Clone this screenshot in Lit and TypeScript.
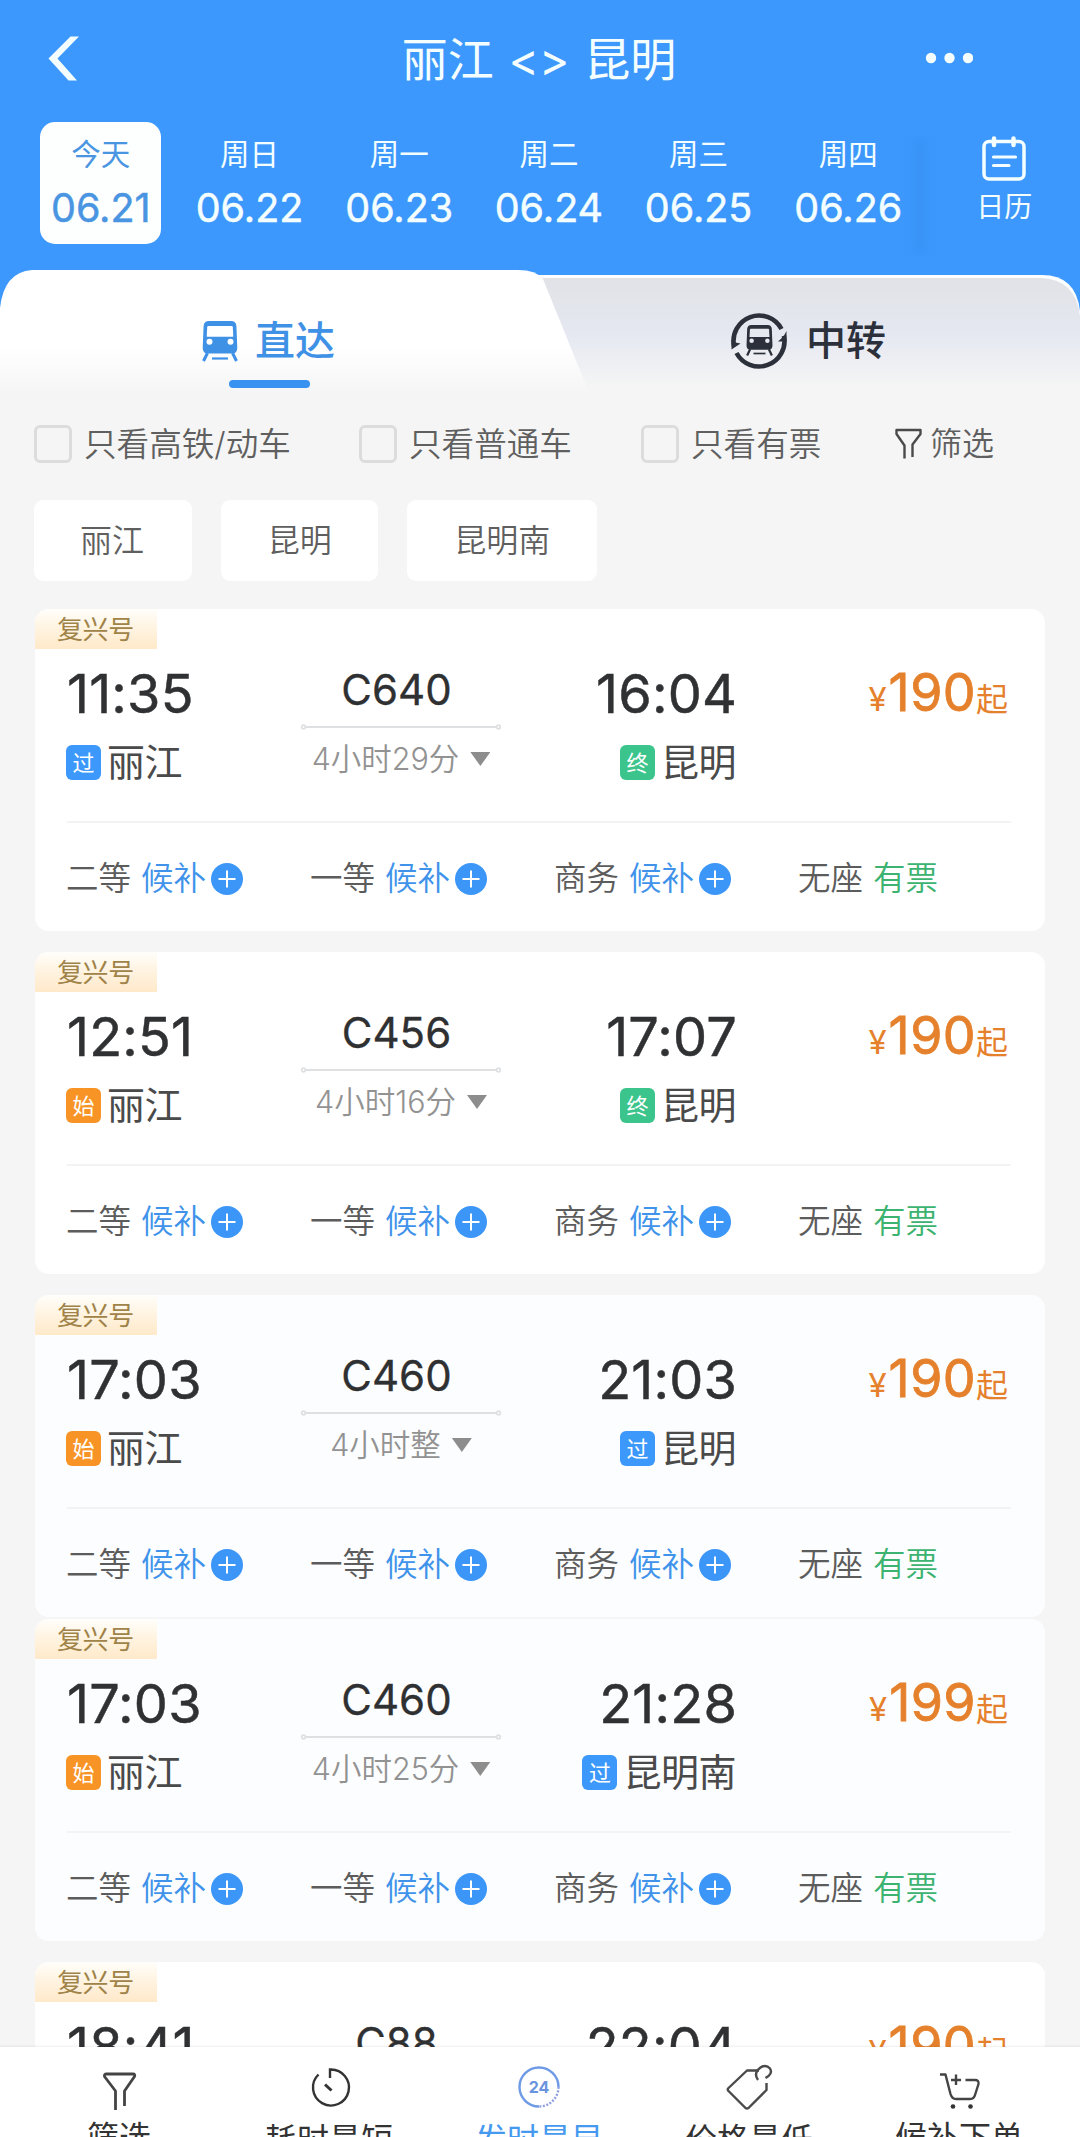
import { LitElement, html, css, svg, nothing } from "lit";
import { customElement, property } from "lit/decorators.js";
import { classMap } from "lit/directives/class-map.js";

const FONT = css`Inter, "Noto Sans CJK SC", sans-serif`;

interface Stop {
  time: string;
  badge: "过" | "始" | "终";
  name: string;
}

interface Train {
  code: string;
  from: Stop;
  to: Stop;
  duration: string;
  price: number;
  joined?: boolean;
  cool?: boolean;
}

const DATES = [
  ["今天", "06.21"],
  ["周日", "06.22"],
  ["周一", "06.23"],
  ["周二", "06.24"],
  ["周三", "06.25"],
  ["周四", "06.26"],
];

const TRAINS: Train[] = [
  {
    code: "C640",
    from: { time: "11:35", badge: "过", name: "丽江" },
    to: { time: "16:04", badge: "终", name: "昆明" },
    duration: "4小时29分",
    price: 190,
  },
  {
    code: "C456",
    from: { time: "12:51", badge: "始", name: "丽江" },
    to: { time: "17:07", badge: "终", name: "昆明" },
    duration: "4小时16分",
    price: 190,
  },
  {
    code: "C460",
    from: { time: "17:03", badge: "始", name: "丽江" },
    to: { time: "21:03", badge: "过", name: "昆明" },
    duration: "4小时整",
    price: 190,
    joined: true,
    cool: true,
  },
  {
    code: "C460",
    from: { time: "17:03", badge: "始", name: "丽江" },
    to: { time: "21:28", badge: "过", name: "昆明南" },
    duration: "4小时25分",
    price: 199,
    cool: true,
  },
  {
    code: "C88",
    from: { time: "18:41", badge: "始", name: "丽江" },
    to: { time: "22:04", badge: "终", name: "昆明" },
    duration: "3小时23分",
    price: 190,
  },
];

const SEATS = [
  { name: "二等", available: false },
  { name: "一等", available: false },
  { name: "商务", available: false },
  { name: "无座", available: true },
];

const BADGE_CLASS = { 过: "pass", 始: "start", 终: "end" };

/** Front view of a train on a 36x40 canvas. */
const trainShape = (color: string, hole: string) => svg`
  <path d="M7 0h22q5 0 5.4 5l.9 22q0 5.500-5.500 5.500h-23.600q-5.500 0-5.500-5.500l.9-22q.4-5 5.400-5z" fill=${color}/>
  <path d="M6.500 5h23q1.200 0 1.300 1.200l.5 9.600h-26.600l.5-9.600q.1-1.200 1.300-1.200z" fill=${hole}/>
  <circle cx="7.500" cy="20.800" r="3" fill=${hole}/>
  <circle cx="28.500" cy="20.800" r="3" fill=${hole}/>
  <path d="M5.500 32l-4 8M30.500 32l4 8" stroke=${color} stroke-width="3" fill="none"/>
  <path d="M10 37.500h16" stroke=${color} stroke-width="2.200" fill="none"/>`;

@customElement("train-card")
class TrainCard extends LitElement {
  @property({ attribute: false }) train!: Train;

  static styles = css`
    :host {
      display: block;
      flex: none;
      font-family: ${FONT};
    }
    .card {
      height: 322px;
      box-sizing: border-box;
      border-radius: 14px;
      background: #fff;
      overflow: hidden;
      display: flex;
      flex-direction: column;
    }
    .card.cool {
      background: #fcfdfe;
    }
    .tag {
      flex: none;
      width: 122px;
      height: 40px;
      box-sizing: border-box;
      padding-left: 22px;
      line-height: 42px;
      font-size: 26px;
      letter-spacing: -0.4px;
      color: #a08348;
      background: linear-gradient(#fffefb, #fff4e2 45%, #ffe9ca);
    }
    .main {
      flex: none;
      height: 174px;
      box-sizing: border-box;
      margin: 0 34px 0 32px;
      padding-top: 14px;
      border-bottom: 2px solid #f2f3f5;
      display: grid;
      grid-template-columns: 234px 200px 236px 1fr;
      align-content: start;
    }
    .stop {
      display: flex;
      flex-direction: column;
      gap: 19px;
    }
    .stop.to {
      align-items: flex-end;
    }
    .time {
      font-size: 54px;
      line-height: 62px;
      height: 60px;
      font-weight: 400;
      color: #303133;
      letter-spacing: 0.2px;
      -webkit-text-stroke: 0.500px #303133;
    }
    .place {
      display: flex;
      align-items: center;
      gap: 6px;
      height: 40px;
      margin-left: -1px;
      font-size: 38px;
      line-height: 40px;
      color: #4a4a4a;
      letter-spacing: -0.5px;
    }
    .stop.to .place {
      margin-right: 1px;
    }
    .badge {
      width: 35px;
      height: 35px;
      border-radius: 6px;
      font-size: 22px;
      line-height: 36px;
      text-align: center;
      letter-spacing: 0;
      color: #fff;
    }
    .badge.pass {
      background: #3c98fa;
    }
    .badge.start {
      background: #f89426;
    }
    .badge.end {
      background: #3bc48b;
    }
    .middle {
      display: flex;
      flex-direction: column;
      align-items: center;
    }
    .code {
      font-size: 42px;
      line-height: 50px;
      padding: 2px 9px 0 0;
      color: #2f3032;
      -webkit-text-stroke: 0.300px #2f3032;
    }
    .line {
      display: block;
      margin-top: 8px;
    }
    .duration {
      display: flex;
      align-items: center;
      gap: 11px;
      height: 40px;
      margin-top: 8px;
      font-size: 30.500px;
      line-height: 40px;
      font-weight: 350;
      color: #929292;
    }
    .arrow {
      width: 20px;
      height: 14px;
      background: #8d8d8d;
      clip-path: polygon(0 0, 100% 0, 50% 100%);
    }
    .price {
      display: flex;
      justify-content: flex-end;
      align-items: baseline;
      color: #e5812c;
      line-height: 59px;
      height: 60px;
      padding-right: 3px;
    }
    .yen {
      font-size: 33px;
    }
    .amount {
      font-size: 52px;
      font-weight: 400;
      letter-spacing: 0.400px;
      -webkit-text-stroke: 0.800px #e5812c;
      margin-left: 2px;
    }
    .up {
      font-size: 32px;
    }
    .seats {
      display: grid;
      grid-template-columns: repeat(4, 244px);
      align-items: center;
      height: 108px;
      box-sizing: border-box;
      padding: 3px 0 0 31px;
    }
    .seat {
      display: flex;
      align-items: center;
      font-size: 32.500px;
      line-height: 44px;
      font-weight: 350;
      color: #5c5c5c;
    }
    .state {
      margin-left: 10px;
      color: #3f93ea;
    }
    .state.ok {
      color: #3cb371;
    }
    .plus {
      margin-left: 5px;
    }
  `;

  private stop(s: Stop, to: boolean) {
    return html`<div class=${classMap({ stop: true, to })}>
      <div class="time">${s.time}</div>
      <div class="place">
        <span class="badge ${BADGE_CLASS[s.badge]}">${s.badge}</span>
        <span>${s.name}</span>
      </div>
    </div>`;
  }

  render() {
    const t = this.train;
    return html`<article class=${classMap({ card: true, cool: !!t.cool })}>
      <div class="tag">复兴号</div>
      <div class="main">
        ${this.stop(t.from, false)}
        <div class="middle">
          <div class="code">${t.code}</div>
          <svg class="line" width="202" height="8" viewBox="0 0 202 8" fill="none" stroke="#dfe0e2">
            <path d="M5 4h192" stroke-width="2" />
            <circle cx="3.500" cy="4" r="1.800" stroke-width="1.800" />
            <circle cx="198.500" cy="4" r="1.800" stroke-width="1.800" />
          </svg>
          <div class="duration"><span>${t.duration}</span><span class="arrow"></span></div>
        </div>
        ${this.stop(t.to, true)}
        <div class="price">
          <span class="yen">¥</span><span class="amount">${t.price}</span><span class="up">起</span>
        </div>
      </div>
      <div class="seats">
        ${SEATS.map(
          (s) => html`<div class="seat">
            <span>${s.name}</span>
            <span class=${classMap({ state: true, ok: s.available })}>${s.available ? "有票" : "候补"}</span>
            ${s.available
              ? nothing
              : html`<svg class="plus" width="32" height="32" viewBox="0 0 32 32">
                  <circle cx="16" cy="16" r="16" fill="#3c96f8" />
                  <path d="M16 7.500v17M7.500 16h17" stroke="#fff" stroke-width="2" />
                </svg>`}
          </div>`
        )}
      </div>
    </article>`;
  }
}

@customElement("app-root")
class AppRoot extends LitElement {
  static styles = css`
    :host {
      display: block;
      font-family: ${FONT};
    }
    .screen {
      width: 1080px;
      height: 2137px;
      overflow: hidden;
      display: flex;
      flex-direction: column;
      background: #f5f5f5;
    }
    .header {
      flex: none;
      height: 270px;
      background: #3c98fc;
      color: #f4feff;
      display: flex;
      flex-direction: column;
    }
    .titlebar {
      height: 122px;
      box-sizing: border-box;
      padding: 0 107px 4px 47px;
      display: grid;
      grid-template-columns: 339px 306px 1fr;
      align-items: center;
    }
    .title {
      text-align: center;
      font-size: 46px;
      line-height: 60px;
      white-space: nowrap;
      word-spacing: 2px;
    }
    .more {
      justify-self: end;
      margin-bottom: 3px;
    }
    .dates {
      display: flex;
      align-items: flex-start;
      padding-left: 26px;
    }
    .date {
      width: 121px;
      height: 122px;
      box-sizing: border-box;
      margin: 0 14.350px;
      padding-top: 12px;
      border-radius: 15px;
      text-align: center;
      white-space: nowrap;
    }
    .date.on {
      margin-right: 13.350px;
      background: #fdfffe;
      color: #4a95e2;
    }
    .day {
      font-size: 29.500px;
      line-height: 40px;
    }
    .num {
      margin-top: 14px;
      font-size: 39.500px;
      line-height: 40px;
      -webkit-text-stroke: 0.500px currentColor;
    }
    .fade {
      width: 12px;
      height: 116px;
      margin: 16px 0 0 -9px;
      background: rgba(50, 130, 230, 0.22);
      filter: blur(5px);
    }
    .calendar {
      display: flex;
      flex-direction: column;
      align-items: center;
      gap: 5px;
      margin: 14px 0 0 50px;
      font-size: 28px;
      line-height: 40px;
    }
    .tabs {
      flex: none;
      height: 130px;
      display: grid;
      grid-template-columns: 540px 540px;
      position: relative;
      isolation: isolate;
    }
    .tabs-bg {
      position: absolute;
      inset: 0;
      z-index: -1;
    }
    .tab {
      display: flex;
      flex-direction: column;
      align-items: flex-start;
      font-size: 40px;
      line-height: 56px;
      font-weight: 500;
    }
    .tab-row {
      display: flex;
      align-items: center;
      height: 56px;
      margin-top: 43px;
      padding-left: 202px;
      gap: 17px;
      color: #3f91e6;
    }
    .tab.transfer .tab-row {
      padding-left: 190px;
      gap: 18px;
      color: #2c303a;
    }
    .tab-line {
      width: 81px;
      height: 8px;
      border-radius: 4px;
      margin: 11px 0 0 229px;
      background: #3a92f0;
    }
    .filters {
      flex: none;
      height: 87px;
      display: flex;
      align-items: center;
      padding-left: 34px;
      font-size: 32.600px;
      line-height: 44px;
      color: #5f5f5f;
      font-weight: 350;
      white-space: nowrap;
    }
    .check {
      display: flex;
      align-items: center;
      gap: 12px;
    }
    .box {
      width: 38px;
      height: 38px;
      box-sizing: border-box;
      border: 3px solid #dcdcdc;
      border-radius: 6px;
    }
    .c1 {
      width: 325px;
    }
    .c2 {
      width: 282px;
    }
    .c3 {
      width: 254px;
    }
    .pick {
      display: flex;
      align-items: center;
      gap: 8px;
      font-size: 32px;
    }
    .chips {
      flex: none;
      display: flex;
      gap: 29px;
      padding: 13px 0 28px 34px;
    }
    .chip {
      height: 81px;
      padding: 0 46.700px;
      border-radius: 9px;
      background: #fff;
      font-size: 32px;
      line-height: 82px;
      font-weight: 350;
      color: #5f5f5f;
    }
    .chip:first-child {
      padding: 0 48.200px 0 45.900px;
    }
    .list {
      flex: 1;
      min-height: 0;
      overflow: hidden;
      display: flex;
      flex-direction: column;
      padding: 0 35px 0 35px;
    }
    .item {
      display: block;
      flex: none;
      margin-bottom: 21px;
    }
    .item.joined {
      margin-bottom: 2px;
    }
    .bar {
      flex: none;
      height: 90px;
      box-sizing: border-box;
      padding: 0 16px 0 14px;
      background: #fff;
      box-shadow: 0 -1px 2px rgba(0, 0, 0, 0.07);
      display: grid;
      grid-template-columns: repeat(5, 210px);
      overflow: hidden;
      position: relative;
    }
    .action {
      display: flex;
      flex-direction: column;
      align-items: center;
      height: 90px;
      font-size: 32px;
      line-height: 40px;
      color: #333;
      white-space: nowrap;
    }
    .action.on {
      color: #459af0;
    }
    .action svg {
      flex: none;
      margin: 13px 0 4px;
    }
    .action.low svg {
      margin-bottom: 6px;
    }
  `;

  render() {
    return html`<div class="screen">
      <header class="header">
        <div class="titlebar">
          <svg width="34" height="48" viewBox="0 0 34 48">
            <path d="M23.500 1.500h8.500L10.500 23.500 30 45.500h-8.500L1.500 23.500z" fill="#f4feff" />
          </svg>
          <div class="title">丽江 &lt;&gt; 昆明</div>
          <svg class="more" width="48" height="12" viewBox="0 0 48 12" fill="#f4feff">
            <circle cx="6" cy="6" r="5.200" />
            <circle cx="24.500" cy="6" r="5.200" />
            <circle cx="43" cy="6" r="5.200" />
          </svg>
        </div>
        <nav class="dates">
          ${DATES.map(
            ([day, num], i) => html`<div class=${classMap({ date: true, on: i === 0 })}>
              <div class="day">${day}</div>
              <div class="num">${num}</div>
            </div>`
          )}
          <div class="fade"></div>
          <div class="calendar">
            <svg width="46" height="46" viewBox="0 0 46 46" fill="none" stroke="#f4feff" stroke-linecap="round">
              <rect x="3" y="5.500" width="40" height="37.500" rx="5" stroke-width="3.500" />
              <path d="M13 2.500v6.500M32.500 2.500v6.500" stroke-width="4.500" />
              <path d="M12.500 21h22M12.500 29.500h15.500" stroke-width="3.200" />
            </svg>
            <span>日历</span>
          </div>
        </nav>
      </header>

      <div class="tabs">
        <svg class="tabs-bg" width="1080" height="130" viewBox="0 0 1080 130">
          <defs>
            <linearGradient id="left" x1="0" y1="0" x2="0" y2="1">
              <stop offset="0.600" stop-color="#ffffff" />
              <stop offset="0.950" stop-color="#f5f5f5" />
            </linearGradient>
            <linearGradient id="right" x1="0" y1="0" x2="0" y2="1">
              <stop offset="0" stop-color="#e1e2e6" />
              <stop offset="0.450" stop-color="#e5e8f1" />
              <stop offset="0.900" stop-color="#f5f5f5" />
            </linearGradient>
          </defs>
          <rect width="1080" height="60" fill="#3c98fc" />
          <path d="M480 5h562q34 0 38 36v89H480z" fill="#fdfeff" />
          <path d="M480 8h560q36 1 40 38v84H480z" fill="url(#right)" />
          <path d="M0 130V38Q4 2 32 0H518Q536 0 543 9L592 130z" fill="url(#left)" />
        </svg>
        <div class="tab">
          <div class="tab-row">
            <svg width="36" height="41" viewBox="0 0 36 41">${trainShape("#3f91e6", "#fff")}</svg>
            <span>直达</span>
          </div>
          <div class="tab-line"></div>
        </div>
        <div class="tab transfer">
          <div class="tab-row">
            <svg width="58" height="60" viewBox="0 0 58 60">
              <g fill="none" stroke="#2c303a" stroke-width="4.600">
                <path d="M4.060 35.300A25.500 25.500 0 0 1 51.500 18" />
                <path d="M53.940 24.700A25.500 25.500 0 0 1 6.500 42" />
              </g>
              <path d="M1.500 29v9.500l9-6-5-1zM56.500 20v10.500l-8.500 0 5.500-5z" fill="#2c303a" />
              <g transform="translate(16 14) scale(.75 .76)">${trainShape("#2c303a", "#e6e8f0")}</g>
            </svg>
            <span>中转</span>
          </div>
        </div>
      </div>

      <div class="filters">
        <div class="check c1"><span class="box"></span><span>只看高铁/动车</span></div>
        <div class="check c2"><span class="box"></span><span>只看普通车</span></div>
        <div class="check c3"><span class="box"></span><span>只看有票</span></div>
        <div class="pick">
          <svg width="27" height="32" viewBox="0 0 27 32" fill="none" stroke="#4a4a4a" stroke-width="2.400" stroke-linejoin="round">
            <path d="M9.500 30.500V17.500L1.500 6V2h24v4L17.500 16.500V29" />
          </svg>
          <span>筛选</span>
        </div>
      </div>

      <div class="chips">
        <div class="chip">丽江</div>
        <div class="chip">昆明</div>
        <div class="chip">昆明南</div>
      </div>

      <main class="list">
        ${TRAINS.map(
          (t) => html`<train-card class=${classMap({ item: true, joined: !!t.joined })} .train=${t}></train-card>`
        )}
      </main>

      <footer class="bar">
        <div class="action">
          <svg width="48" height="54" viewBox="0 0 48 54" fill="none" stroke="#444" stroke-width="2.800" stroke-linejoin="round">
            <path d="M20.500 50V31L9.500 16.500Q9 14 11.500 14H38Q40.500 14 39.500 16.500L29.500 31V46" />
          </svg>
          <span>筛选</span>
        </div>
        <div class="action low">
          <svg width="48" height="54" viewBox="0 0 48 54" fill="none" stroke="#333" stroke-width="2.400">
            <path d="M13.500 14.500A18 18 0 1 0 25 9.500V18" />
            <path d="M20 24.500l6.500 6" stroke-width="3" />
          </svg>
          <span>耗时最短</span>
        </div>
        <div class="action on low">
          <svg width="48" height="54" viewBox="0 0 48 54" fill="none" stroke="#6f9be6" stroke-width="2.400">
            <path d="M24 46.500A19.500 19.500 0 1 1 43.500 27" />
            <path d="M43.500 27A19.500 19.500 0 0 1 24 46.500" stroke-dasharray="2 1.500" stroke="#8f9fe0" />
            <text x="24" y="33" text-anchor="middle" font-size="16" font-weight="700" stroke="none" fill="#6a94de">24</text>
          </svg>
          <span>发时最早</span>
        </div>
        <div class="action low">
          <svg width="48" height="54" viewBox="0 0 48 54" fill="none" stroke="#4a4a4a" stroke-width="2.400" stroke-linejoin="round">
            <path d="M34 10.500H22L3 28.500Q2.300 30 3.500 31L20.500 48Q22 49 23.500 48L41.500 30V23" />
            <path d="M33 20Q28 13 35.500 7.500Q41 4 45 8.500Q47.500 13 43.500 16L40.500 18" />
          </svg>
          <span>价格最低</span>
        </div>
        <div class="action">
          <svg width="48" height="54" viewBox="0 0 48 54" fill="none" stroke="#444" stroke-width="2.400" stroke-linejoin="round">
            <path d="M5 14.500h5.500L15.500 34Q17 39 21 39H35Q39 39 40 35L43.500 24Q44 20 40 20H30.500" />
            <path d="M21 14.500v10.500M16 20h10" />
            <circle cx="18" cy="46.500" r="2.300" fill="#333" stroke="none" />
            <circle cx="35.500" cy="46.500" r="2.300" fill="#333" stroke="none" />
          </svg>
          <span>候补下单</span>
        </div>
      </footer>
    </div>`;
  }
}
